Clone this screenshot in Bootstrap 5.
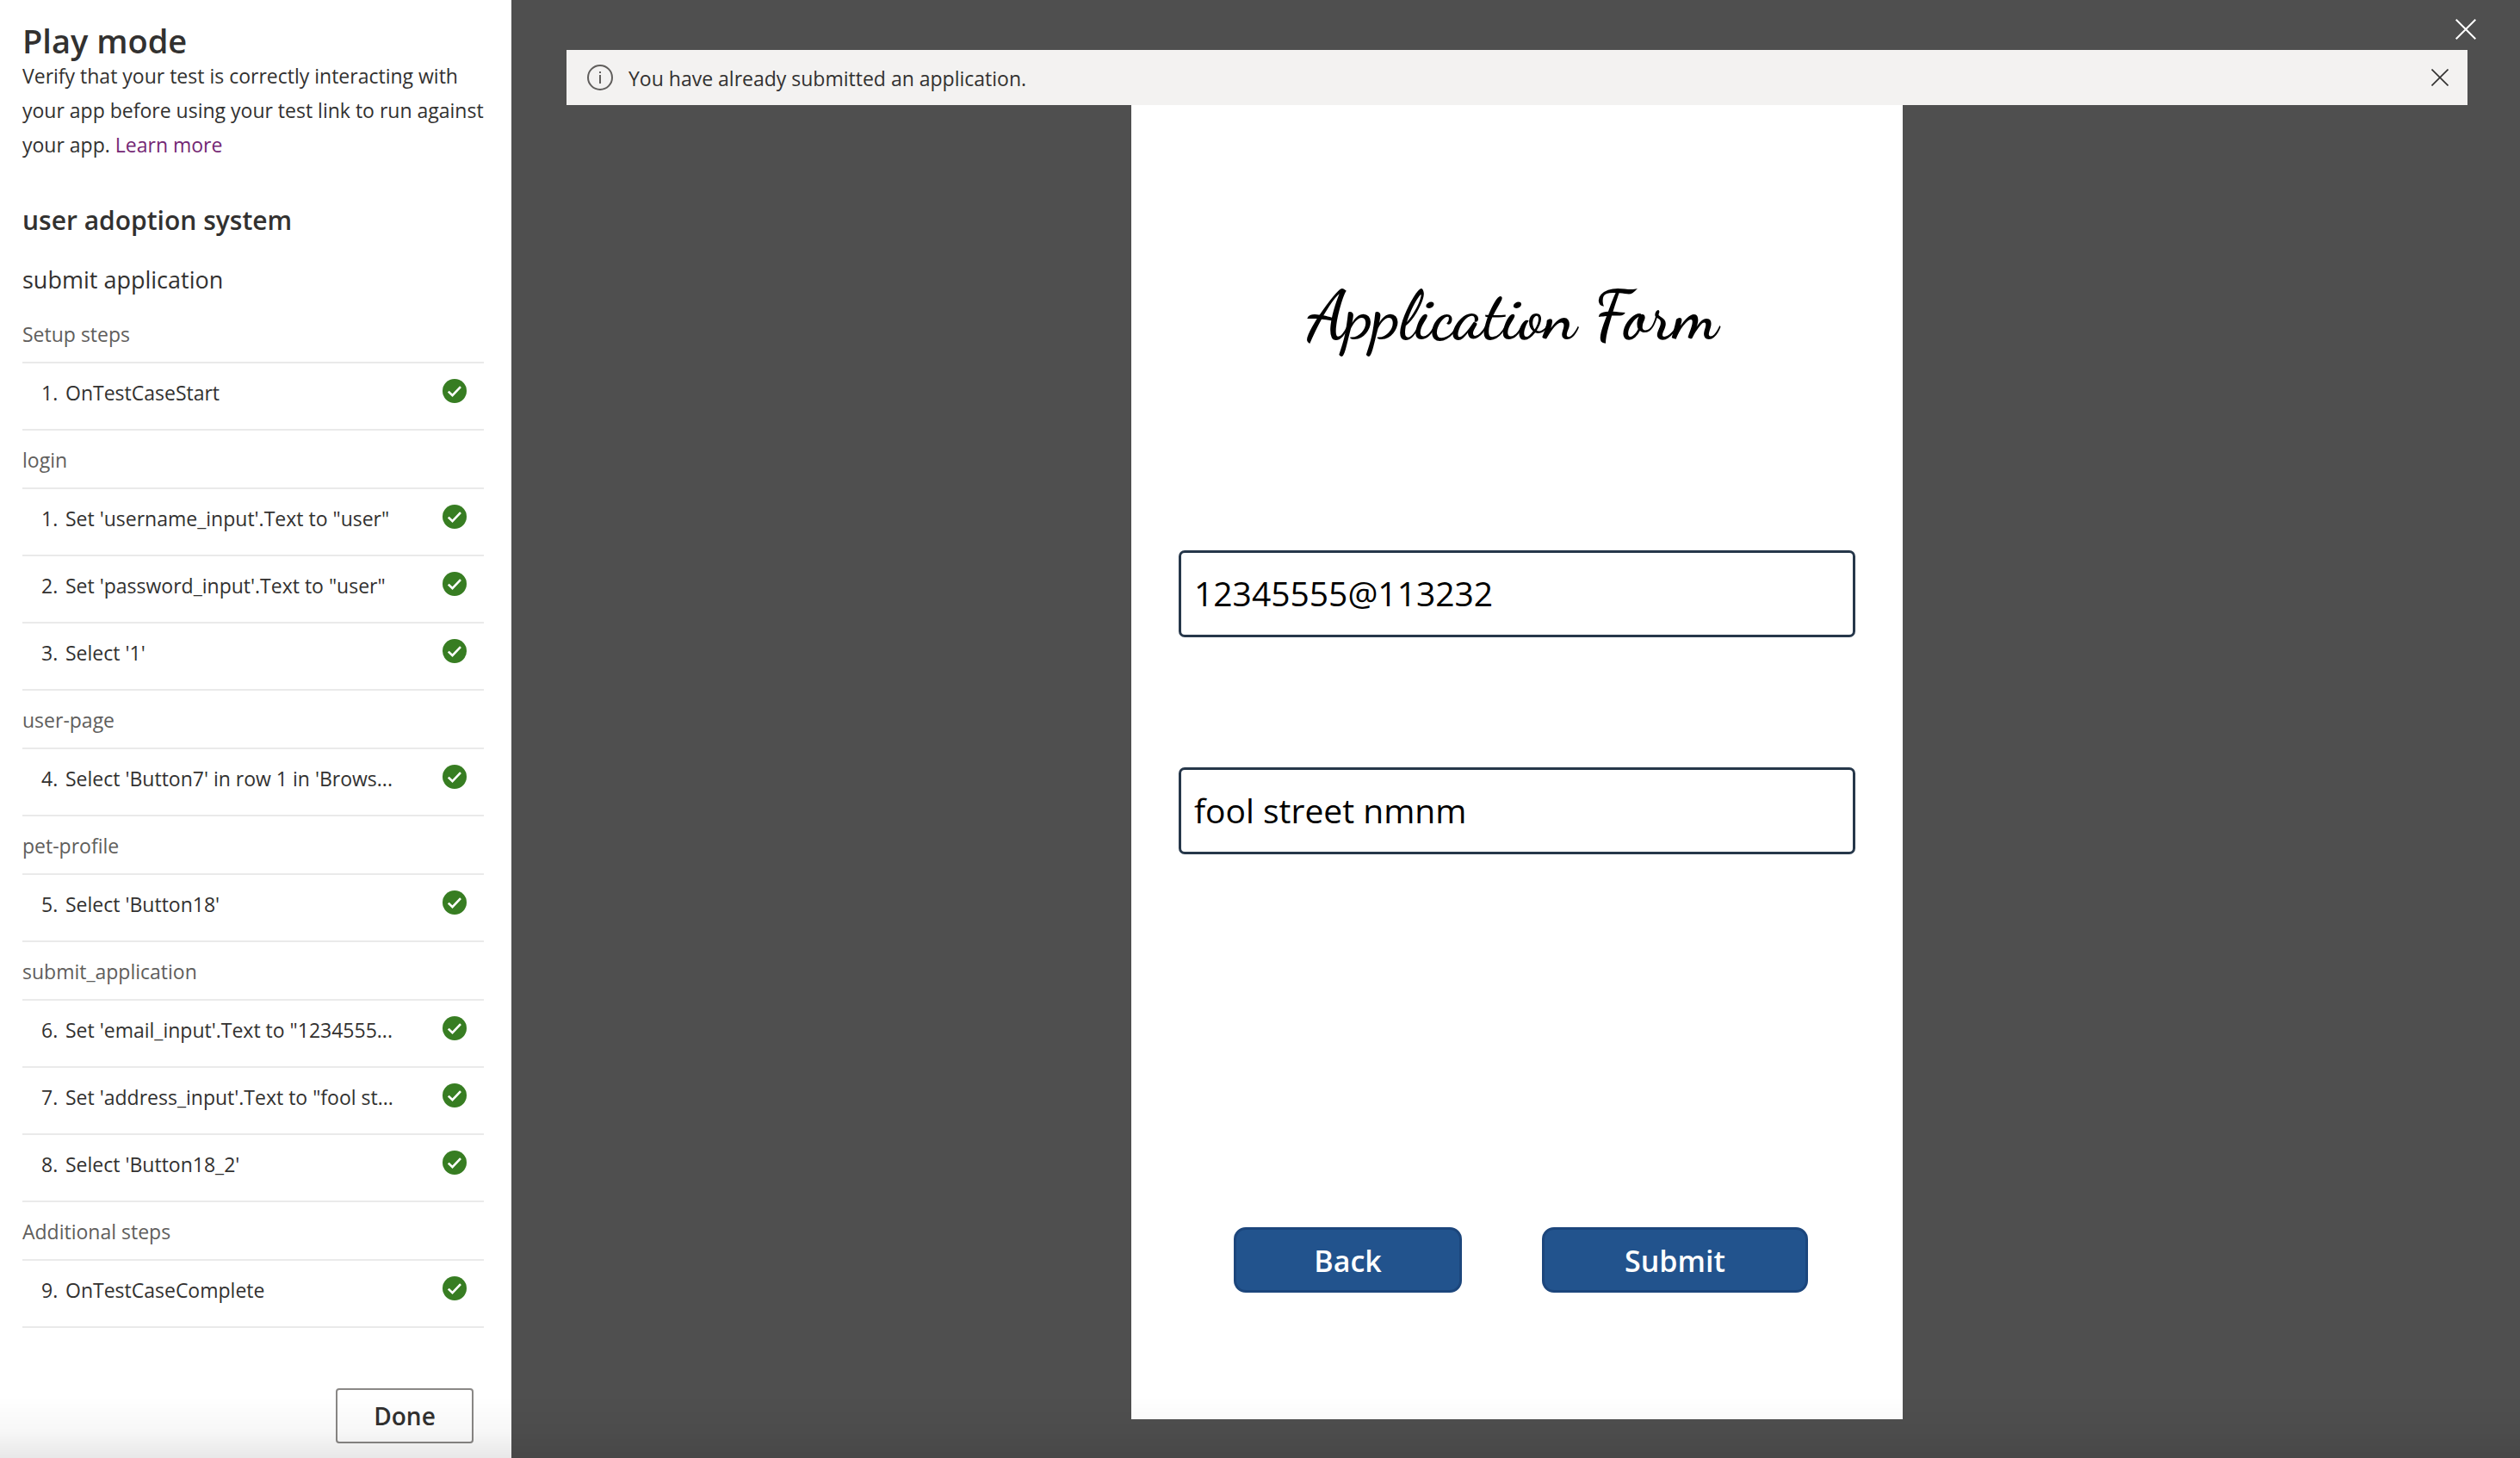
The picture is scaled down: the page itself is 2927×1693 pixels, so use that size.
<!DOCTYPE html>
<html lang="en">
<head>
<meta charset="utf-8">
<meta name="viewport" content="width=device-width, initial-scale=1">
<title>Play mode</title>
<link href="https://cdn.jsdelivr.net/npm/bootstrap@5.3.0/dist/css/bootstrap.min.css" rel="stylesheet">
<style>
  body { font-family: "Open Sans", "Noto Sans", sans-serif; font-size: 23px; line-height: 40px; color: #323130; background: #4f4f4f; }
  .side-panel { width: 594px; padding: 26px 32px 17px 26px; }
  .panel-title { font-size: 38px; line-height: 42px; font-weight: 600; }
  .panel-intro { margin-right: -16px; }
  .learn-link { color: #742774; }
  .suite-name { font-size: 30px; line-height: 40px; font-weight: 600; margin-top: 48px; }
  .case-name { font-size: 27px; line-height: 40px; margin-top: 29px; margin-bottom: 9px; }
  .group-name { height: 68px; padding-top: 14px; font-size: 23px; line-height: 40px; color: #605e5c; border-bottom: 2px solid #eaeaea; }
  .step-row { height: 78px; padding: 14px 20px 0 22px; border-bottom: 2px solid #eaeaea; }
  .step-num { width: 28px; }
  .step-text { width: 400px; }
  .step-icon { margin-top: 4px; }
  .done-btn { width: 160px; height: 64px; border: 2px solid #8a8886; border-radius: 4px; background: #fff; color: #323130; font-size: 28px; font-weight: 600; padding: 0; }
  .stage { padding: 0 61px 45px 64px; }
  .stage-top { height: 58px; padding: 12px 0; margin-right: -10px; }
  .notice { height: 64px; background: #f3f2f1; padding: 0 22px 0 24px; }
  .notice-text { margin-left: 18px; padding-top: 2px; }
  .app-form { width: 896px; background: #fff; padding: 190px 55px 0; }
  .form-heading { font-family: "Dancing Script", cursive; font-weight: 600; font-size: 78px; line-height: 110px; margin-bottom: 217px; padding-right: 10px; color: #000; }
  .app-input { height: 101px; border: 3px solid #26374a; border-radius: 7px; padding: 0 15px 2px; font-size: 39px; color: #000; }
  .app-input + .app-input { margin-top: 151px; }
  .form-actions { margin-top: 433px; padding: 0 55px 0 64px; }
  .app-btn { height: 76px; border: 3px solid #1c467c; border-radius: 14px; background: #22538d; color: #fff; font-size: 34px; font-weight: 600; padding: 2px 0 0; }
  .back-btn { width: 265px; }
  .submit-btn { width: 309px; }
  .bottom-shade { height: 70px; background: linear-gradient(rgba(0,0,0,0), rgba(0,0,0,.03) 55%, rgba(0,0,0,.09)); pointer-events: none; }
</style>
</head>
<body>
<svg class="d-none" aria-hidden="true">
  <symbol id="done-mark" viewBox="0 0 28 28"><circle cx="14" cy="14" r="14" fill="#377d22"/><path d="M6.8 14.6l4.7 4.6L21 9.2" fill="none" stroke="#fff" stroke-width="2.6"/></symbol>
</svg>
<div class="d-flex min-vh-100">
  <aside class="side-panel d-flex flex-column flex-shrink-0 bg-white">
    <h1 class="panel-title mb-0">Play mode</h1>
    <p class="panel-intro mb-0">Verify that your test is correctly interacting with your app before using your test link to run against your app. <a class="learn-link text-decoration-none" href="#">Learn more</a></p>
    <h2 class="suite-name mb-0">user adoption system</h2>
    <h3 class="case-name">submit application</h3>

    <h4 class="group-name mb-0">Setup steps</h4>
    <div class="step-row d-flex"><span class="step-num">1.</span><span class="step-text text-truncate">OnTestCaseStart</span><svg class="step-icon ms-auto" width="28" height="28"><use href="#done-mark"/></svg></div>
    <h4 class="group-name mb-0">login</h4>
    <div class="step-row d-flex"><span class="step-num">1.</span><span class="step-text text-truncate">Set 'username_input'.Text to "user"</span><svg class="step-icon ms-auto" width="28" height="28"><use href="#done-mark"/></svg></div>
    <div class="step-row d-flex"><span class="step-num">2.</span><span class="step-text text-truncate">Set 'password_input'.Text to "user"</span><svg class="step-icon ms-auto" width="28" height="28"><use href="#done-mark"/></svg></div>
    <div class="step-row d-flex"><span class="step-num">3.</span><span class="step-text text-truncate">Select '1'</span><svg class="step-icon ms-auto" width="28" height="28"><use href="#done-mark"/></svg></div>
    <h4 class="group-name mb-0">user-page</h4>
    <div class="step-row d-flex"><span class="step-num">4.</span><span class="step-text text-truncate">Select 'Button7' in row 1 in 'Brows...</span><svg class="step-icon ms-auto" width="28" height="28"><use href="#done-mark"/></svg></div>
    <h4 class="group-name mb-0">pet-profile</h4>
    <div class="step-row d-flex"><span class="step-num">5.</span><span class="step-text text-truncate">Select 'Button18'</span><svg class="step-icon ms-auto" width="28" height="28"><use href="#done-mark"/></svg></div>
    <h4 class="group-name mb-0">submit_application</h4>
    <div class="step-row d-flex"><span class="step-num">6.</span><span class="step-text text-truncate">Set 'email_input'.Text to "1234555...</span><svg class="step-icon ms-auto" width="28" height="28"><use href="#done-mark"/></svg></div>
    <div class="step-row d-flex"><span class="step-num">7.</span><span class="step-text text-truncate">Set 'address_input'.Text to "fool st...</span><svg class="step-icon ms-auto" width="28" height="28"><use href="#done-mark"/></svg></div>
    <div class="step-row d-flex"><span class="step-num">8.</span><span class="step-text text-truncate">Select 'Button18_2'</span><svg class="step-icon ms-auto" width="28" height="28"><use href="#done-mark"/></svg></div>
    <h4 class="group-name mb-0">Additional steps</h4>
    <div class="step-row d-flex"><span class="step-num">9.</span><span class="step-text text-truncate">OnTestCaseComplete</span><svg class="step-icon ms-auto" width="28" height="28"><use href="#done-mark"/></svg></div>

    <div class="mt-auto d-flex justify-content-end me-2 pe-1">
      <button type="button" class="btn done-btn">Done</button>
    </div>
  </aside>

  <main class="stage d-flex flex-column flex-grow-1">
    <div class="stage-top d-flex justify-content-end">
      <button type="button" class="btn border-0 p-0 d-flex" aria-label="Close play mode">
        <svg width="24" height="44" viewBox="0 0 24 44"><path d="M.7 10.7l22.6 22.6M23.3 10.7L.7 33.3" stroke="#fff" stroke-width="2"/></svg>
      </button>
    </div>
    <div class="notice d-flex align-items-center" role="status">
      <svg width="30" height="30" viewBox="0 0 30 30"><circle cx="15" cy="15" r="14" fill="none" stroke="#605e5c" stroke-width="2"/><path d="M15 12v10M15 8v2" stroke="#605e5c" stroke-width="2"/></svg>
      <span class="notice-text">You have already submitted an application.</span>
      <button type="button" class="btn border-0 p-0 d-flex ms-auto" aria-label="Dismiss">
        <svg width="20" height="20" viewBox="0 0 20 20"><path d="M.5.5l19 19M19.5.5l-19 19" stroke="#323130" stroke-width="1.6"/></svg>
      </button>
    </div>
    <form class="app-form align-self-center flex-grow-1">
      <h2 class="form-heading text-center">Application Form</h2>
      <input class="form-control app-input" aria-label="Email" value="12345555@113232">
      <input class="form-control app-input" aria-label="Address" value="fool street nmnm">
      <div class="form-actions d-flex justify-content-between">
        <button type="button" class="btn app-btn back-btn">Back</button>
        <button type="button" class="btn app-btn submit-btn">Submit</button>
      </div>
    </form>
  </main>
</div>
<div class="bottom-shade fixed-bottom"></div>
<script src="https://cdn.jsdelivr.net/npm/bootstrap@5.3.0/dist/js/bootstrap.bundle.min.js"></script>
</body>
</html>
